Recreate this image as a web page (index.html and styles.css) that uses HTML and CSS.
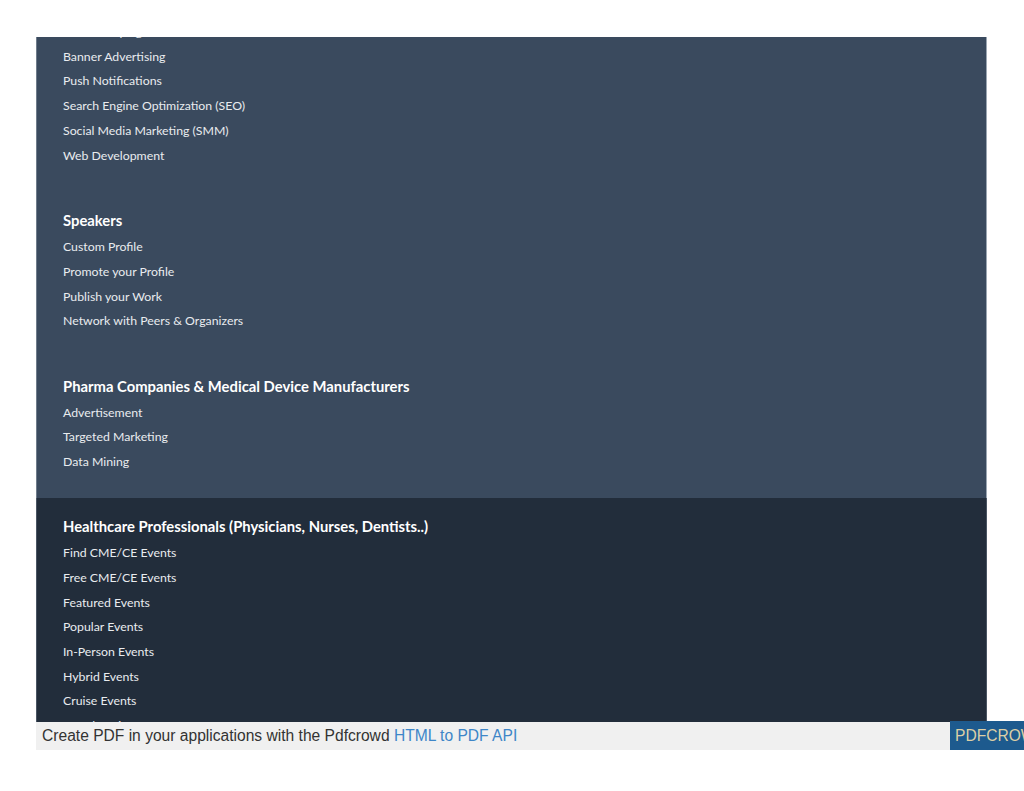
FILE: index.html
```html
<!DOCTYPE html>
<html>
<head>
    <meta charset="UTF-8">
    <title>Footer Menu</title>
    <link rel="stylesheet" href="styles.css">
</head>
<body>
    <div class="page">
        <div class="panel">
            <div class="panel-inner">
                <div class="section section-light">
                    <div class="group group-cut">
                        <ul class="links">
                            <li><a href="#">Email Campaigns</a></li>
                            <li><a href="#">Banner Advertising</a></li>
                            <li><a href="#">Push Notifications</a></li>
                            <li><a href="#">Search Engine Optimization (SEO)</a></li>
                            <li><a href="#">Social Media Marketing (SMM)</a></li>
                            <li><a href="#">Web Development</a></li>
                        </ul>
                    </div>
                    <div class="group">
                        <h3>Speakers</h3>
                        <ul class="links">
                            <li><a href="#">Custom Profile</a></li>
                            <li><a href="#">Promote your Profile</a></li>
                            <li><a href="#">Publish your Work</a></li>
                            <li><a href="#">Network with Peers &amp; Organizers</a></li>
                        </ul>
                    </div>
                    <div class="group">
                        <h3>Pharma Companies &amp; Medical Device Manufacturers</h3>
                        <ul class="links">
                            <li><a href="#">Advertisement</a></li>
                            <li><a href="#">Targeted Marketing</a></li>
                            <li><a href="#">Data Mining</a></li>
                        </ul>
                    </div>
                </div>
                <div class="section section-dark">
                    <div class="group">
                        <h3>Healthcare Professionals (Physicians, Nurses, Dentists..)</h3>
                        <ul class="links">
                            <li><a href="#">Find CME/CE Events</a></li>
                            <li><a href="#">Free CME/CE Events</a></li>
                            <li><a href="#">Featured Events</a></li>
                            <li><a href="#">Popular Events</a></li>
                            <li><a href="#">In-Person Events</a></li>
                            <li><a href="#">Hybrid Events</a></li>
                            <li><a href="#">Cruise Events</a></li>
                            <li><a href="#">Board Review Courses</a></li>
                        </ul>
                    </div>
                </div>
            </div>
        </div>
        <div class="pdfcrowd">
            <div class="pdfcrowd-text">Create PDF in your applications with the Pdfcrowd <a href="#">HTML to PDF API</a></div>
            <div class="pdfcrowd-logo">PDFCROWD</div>
        </div>
    </div>
</body>
</html>
```

FILE: styles.css
```css
body {
    margin: 0;
    background-color: #fff;
    font-family: "Lato", "Open Sans", Arial, sans-serif;
    overflow: hidden;
}

.page {
    padding-top: 37px;
    margin-left: 36px;
}

.panel {
    width: 951px;
    height: 685px;
    overflow: hidden;
}

.panel-inner {
    margin-top: -17.2px; /* 上一段内容被截掉 */
}

.section {
    padding: 0 26px;
    border-left: 1px solid #6f7c8b;
    border-right: 1px solid #9ba6b2;
}

.section-light {
    background-color: #3a4a5e;
    padding-bottom: 23.5px;
}

.section-dark {
    background-color: #222d3b;
    border-left-color: #4a5563;
    border-right-color: #4a5563;
    padding-top: 18px;
}

.group + .group {
    margin-top: 41.4px;
}

h3 {
    margin: 0 0 5px;
    color: #fff;
    font-size: 14.8px;
    font-weight: 700;
    line-height: 20px;
}

.links {
    list-style: none;
    margin: 0;
    padding: 0;
}

.links li {
    font-size: 12.3px;
    line-height: 24.8px;
}

.section-dark .links li {
    line-height: 24.65px;
}

.links a {
    color: #e9ecef;
    text-decoration: none;
}

.pdfcrowd {
    display: flex;
    align-items: stretch;
    height: 28px;
    font-family: "Liberation Sans", Arial, sans-serif;
    font-size: 15.6px;
}

.pdfcrowd-text {
    flex: none;
    width: 908px;
    padding-left: 6px;
    background-color: #f0f0f0;
    color: #333;
    line-height: 28px;
}

.pdfcrowd-text a {
    color: #3e86c8;
    text-decoration: none;
}

.pdfcrowd-logo {
    flex: none;
    margin-top: -1px;
    padding-left: 5px;
    background-color: #1d5a8e;
    color: #dccfa6;
    line-height: 30px;
    white-space: nowrap;
}
```
